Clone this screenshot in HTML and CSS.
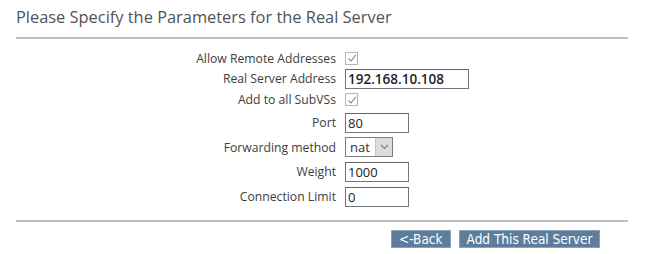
FILE: index.html
```html
<!DOCTYPE html>
<html>
<head>
<meta charset="utf-8">
<link rel="stylesheet" href="styles.css">
</head>
<body>
<div class="page">
  <h2 class="title">Please Specify the Parameters for the Real Server</h2>
  <div class="rule"></div>
  <div class="form">
    <label class="lbl">Allow Remote Addresses</label>
    <div class="ctl"><span class="cb"><svg width="10" height="10" viewBox="0 0 10 10"><path d="M1.5 5.5 L4 8 L8.8 1.8" fill="none" stroke="#8a8a8a" stroke-width="1.1"/></svg></span></div>

    <label class="lbl">Real Server Address</label>
    <div class="ctl"><span class="inp wide bold">192.168.10.108</span></div>

    <label class="lbl">Add to all SubVSs</label>
    <div class="ctl"><span class="cb"><svg width="10" height="10" viewBox="0 0 10 10"><path d="M1.5 5.5 L4 8 L8.8 1.8" fill="none" stroke="#8a8a8a" stroke-width="1.1"/></svg></span></div>

    <label class="lbl">Port</label>
    <div class="ctl"><span class="inp">80</span></div>

    <label class="lbl">Forwarding method</label>
    <div class="ctl"><span class="sel"><span class="selval">nat</span><span class="selbtn"><svg width="9" height="6" viewBox="0 0 9 6"><path d="M1 1 L4.5 4.5 L8 1" fill="none" stroke="#7a7a7a" stroke-width="1.1"/></svg></span></span></div>

    <label class="lbl">Weight</label>
    <div class="ctl"><span class="inp">1000</span></div>

    <label class="lbl">Connection Limit</label>
    <div class="ctl"><span class="inp">0</span></div>
  </div>
  <div class="rule rule2"></div>
  <div class="actions">
    <button class="btn">&lt;-Back</button>
    <button class="btn">Add This Real Server</button>
  </div>
</div>
</body>
</html>
```

FILE: styles.css
```css
html, body {
  margin: 0;
  padding: 0;
  background: #ffffff;
}
body {
  font-family: "Open Sans", "DejaVu Sans", sans-serif;
  color: #444;
}
.page {
  width: 612px;
  padding-left: 16px;
}
.title {
  margin: 0;
  padding-top: 6px;
  height: 31px;
  font-size: 16.4px;
  line-height: 22px;
  font-weight: normal;
  color: #4f5358;
}
.rule {
  height: 2px;
  background: #b3c2cf;
}
.form {
  display: grid;
  grid-template-columns: 320px auto;
  column-gap: 9px;
  grid-template-rows: 20px 21px 21px 25px 24px 25px 25px;
  margin-top: 9px;
  align-items: center;
}
.lbl {
  text-align: right;
  font-size: 12.2px;
  color: #3d3d3d;
  white-space: nowrap;
}
.ctl {
  display: flex;
  align-items: center;
}
.cb {
  display: inline-flex;
  align-items: center;
  justify-content: center;
  width: 11px;
  height: 11px;
  border: 1px solid #b5b5b5;
  background: #fff;
}
.inp {
  display: inline-block;
  box-sizing: border-box;
  width: 64px;
  height: 20px;
  border: 1px solid #6f757b;
  border-top-color: #5f656b;
  padding: 0 2px;
  font-size: 13px;
  line-height: 18px;
  color: #222;
  font-family: "Open Sans", "DejaVu Sans", sans-serif;
}
.wide {
  width: 124px;
}
.bold {
  font-weight: 600;
  font-size: 13.5px;
  color: #1e1e2a;
}
.sel {
  display: inline-flex;
  box-sizing: border-box;
  width: 48px;
  height: 20px;
  border: 1px solid #7a7f85;
  background: #fff;
}
.selval {
  flex: 1;
  font-size: 13px;
  line-height: 18px;
  padding-left: 4px;
  color: #333;
}
.selbtn {
  width: 16px;
  background: #dcdcdc;
  border-left: 1px solid #c4c4c4;
  display: flex;
  align-items: center;
  justify-content: center;
}
.rule2 {
  margin-top: 11px;
}
.actions {
  display: flex;
  gap: 8px;
  padding-left: 375px;
  margin-top: 8px;
}
.btn {
  height: 18px;
  padding: 0 7px;
  border: 1px solid #8aa0b4;
  background: #5c7d9b;
  color: #ffffff;
  font-family: "DejaVu Sans Condensed", "DejaVu Sans", sans-serif;
  font-size: 13.5px;
  line-height: 16px;
  border-radius: 0;
}
```
